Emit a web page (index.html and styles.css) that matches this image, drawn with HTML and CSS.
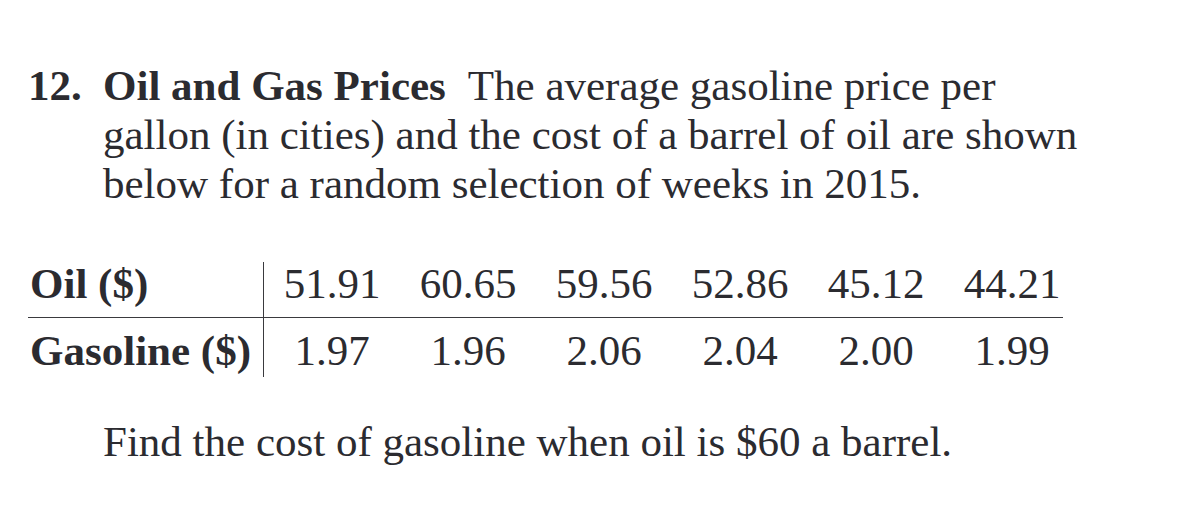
FILE: index.html
```html
<!DOCTYPE html>
<html lang="en">
<head>
<meta charset="utf-8">
<title>Oil and Gas Prices</title>
<link rel="stylesheet" href="styles.css">
</head>
<body>
<main class="page">
  <section class="problem">
    <div class="num">12.</div>
    <div class="text">
      <div class="line"><b class="title">Oil and Gas Prices</b><span class="lead">The average gasoline price per</span></div>
      <div class="line">gallon (in cities) and the cost of a barrel of oil are shown</div>
      <div class="line">below for a random selection of weeks in 2015.</div>
    </div>
  </section>
  <div class="table">
    <div class="row row-top">
      <div class="label">Oil ($)</div>
      <div class="cell">51.91</div>
      <div class="cell">60.65</div>
      <div class="cell">59.56</div>
      <div class="cell">52.86</div>
      <div class="cell">45.12</div>
      <div class="cell">44.21</div>
    </div>
    <div class="row row-bottom">
      <div class="label">Gasoline ($)</div>
      <div class="cell">1.97</div>
      <div class="cell">1.96</div>
      <div class="cell">2.06</div>
      <div class="cell">2.04</div>
      <div class="cell">2.00</div>
      <div class="cell">1.99</div>
    </div>
  </div>
  <p class="question">Find the cost of gasoline when oil is $60 a barrel.</p>
</main>
</body>
</html>
```
FILE: styles.css
```css
html, body {
  margin: 0;
  padding: 0;
  background: #ffffff;
}

body {
  font-family: "Liberation Serif", "Times New Roman", serif;
  font-size: 43px;
  color: #2b2b30;
}

.page {
  padding: 61px 0 0 28px;
}

.problem {
  display: flex;
  width: 1100px;
}

.num {
  flex: 0 0 75px;
  font-weight: bold;
  line-height: 49px;
}

.text {
  width: 1000px;
  line-height: 49px;
}

.line {
  display: flex;
  white-space: nowrap;
}

.title {
  font-weight: bold;
  margin-right: 22px;
}

.table {
  margin-top: 54px;
  width: 1035px;
}

.row {
  display: grid;
  grid-template-columns: 236px repeat(6, 136px);
  width: 1035px;
  line-height: 43px;
}

.row-top {
  border-bottom: 1px solid #3a3a3e;
}

.row-top .label,
.row-top .cell {
  padding: 0 0 12px;
}

.row-bottom .label,
.row-bottom .cell {
  padding: 11px 0 5px;
}

.label {
  font-weight: bold;
  border-right: 1px solid #3a3a3e;
  padding-left: 2px !important;
}

.cell {
  text-align: center;
}

.question {
  margin: 40px 0 0 75px;
  line-height: 49px;
}
```
